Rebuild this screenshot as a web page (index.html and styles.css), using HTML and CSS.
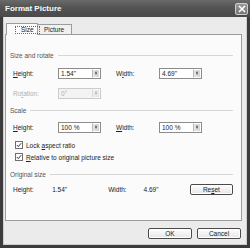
FILE: index.html
```html
<!DOCTYPE html>
<html>
<head>
<meta charset="utf-8">
<link rel="stylesheet" href="styles.css">
</head>
<body>
<div class="win">
  <div class="titlebar">
    <span class="title">Format Picture</span>
    <span class="close">
      <svg width="8" height="8" viewBox="0 0 8 8"><path d="M1 1L7 7M7 1L1 7" stroke="#fff" stroke-width="1.6"/></svg>
    </span>
  </div>
  <div class="body">
    <div class="tabs">
      <div class="tab active"><span class="focus">Size</span></div>
      <div class="tab">Picture</div>
    </div>
    <div class="panel">
      <div class="group g1"><span>Size and rotate</span><span class="rule"></span></div>
      <div class="row r1">
        <span class="lbl"><u>H</u>eight:</span>
        <span class="spin"><span class="val">1.54"</span><span class="arr"><i></i><i class="dn"></i></span></span>
        <span class="lbl2">W<u>i</u>dth:</span>
        <span class="spin"><span class="val">4.69"</span><span class="arr"><i></i><i class="dn"></i></span></span>
      </div>
      <div class="row">
        <span class="lbl dis">Ro<u>t</u>ation:</span>
        <span class="spin dis"><span class="val">0°</span><span class="arr"><i></i><i class="dn"></i></span></span>
      </div>
      <div class="group g2"><span>Scale</span><span class="rule"></span></div>
      <div class="row r3">
        <span class="lbl"><u>H</u>eight:</span>
        <span class="spin"><span class="val">100 %</span><span class="arr"><i></i><i class="dn"></i></span></span>
        <span class="lbl2"><u>W</u>idth:</span>
        <span class="spin"><span class="val">100 %</span><span class="arr"><i></i><i class="dn"></i></span></span>
      </div>
      <div class="check c1"><span class="box"><svg width="6" height="6" viewBox="0 0 6 6"><path d="M0.8 3L2.3 4.6L5.2 1.2" fill="none" stroke="#333" stroke-width="1"/></svg></span><span>Lock <u>a</u>spect ratio</span></div>
      <div class="check"><span class="box"><svg width="6" height="6" viewBox="0 0 6 6"><path d="M0.8 3L2.3 4.6L5.2 1.2" fill="none" stroke="#333" stroke-width="1"/></svg></span><span><u>R</u>elative to original picture size</span></div>
      <div class="group g3"><span>Original size</span><span class="rule"></span></div>
      <div class="row orig">
        <span class="lbl">Height:</span>
        <span class="ov">1.54"</span>
        <span class="lbl2 w2">Width:</span>
        <span class="ov2">4.69"</span>
        <span class="btn reset"><span>Re<u>s</u>et</span></span>
      </div>
    </div>
    <div class="footer">
      <span class="btn">OK</span>
      <span class="btn">Cancel</span>
    </div>
  </div>
</div>
</body>
</html>
```
FILE: styles.css
```css
* { box-sizing: border-box; }
html, body { margin: 0; padding: 0; background: #333; }
body { width: 250px; height: 248px; font-family: "Liberation Sans", Arial, sans-serif; font-size: 6.5px; color: #222; }
.win { width: 250px; height: 248px; background: #3c3c3c; display: flex; flex-direction: column; }
.titlebar { height: 17px; flex: none; display: flex; align-items: center; justify-content: space-between; padding: 0 2px 0 5px; background: linear-gradient(#6a6a6a, #555 40%, #4a4a4a); }
.title { color: #fafafa; font-weight: bold; font-size: 8px; }
.close { width: 13px; height: 12px; border: 1px solid #ccc; border-radius: 2px; background: linear-gradient(#9a9a9a, #767676); display: flex; align-items: center; justify-content: center; }
.body { flex: 1; background: #ebebeb; display: flex; flex-direction: column; margin: 0 3px 3px 3px; border: 1px solid #cfcfcf; border-top: none; padding: 6px 4px 0 1px; }
.tabs { display: flex; height: 11px; padding-left: 1px; align-items: flex-end; }
.tab { border: 1px solid #9c9c9c; border-bottom: none; background: #f0f0f0; height: 10px; padding: 0 7px 0 6px; display: flex; align-items: center; margin-right: -1px; border-radius: 1px 1px 0 0; }
.tab.active { background: #fcfcfc; position: relative; z-index: 1; margin-bottom: -1px; height: 12px; padding: 0 2px 0 8px; width: 32px; }
.focus { border: 1px dotted #666; padding: 0 5px; line-height: 6px; }
.panel { height: 187px; background: #fbfbfb; border: 1px solid #9c9c9c; padding: 14px 8px 0 7px; display: flex; flex-direction: column; }
.group { display: flex; align-items: center; height: 12px; color: #555; margin-left: -3px; flex: none; }
.rule { flex: 1; height: 1px; background: #d6d6d6; margin-left: 4px; }
.row { display: flex; align-items: center; height: 20px; flex: none; }
.r1 { margin-top: 2px; }
.g2 { margin-top: 1px; }
.r3 { margin-top: 1px; }
.c1 { margin-top: 2px; }
.g3 { margin-top: 5px; }
.orig { height: 18px; margin-top: 0; }
.lbl { width: 45px; }
.lbl2 { width: 43px; margin-left: 15px; }
.spin { width: 43px; height: 11px; border: 1px solid #8c8c8c; background: #fff; display: flex; }
.val { flex: 1; padding-left: 2px; line-height: 9px; }
.arr { width: 8px; background: linear-gradient(90deg, #e6e6e6, #d4d4d4); border: 1px solid #fff; border-left-color: #bbb; display: flex; flex-direction: column; align-items: center; justify-content: space-around; padding: 1px 0; }
.arr i { width: 0; height: 0; border-left: 1.5px solid transparent; border-right: 1.5px solid transparent; border-bottom: 2px solid #555; }
.arr i.dn { border-bottom: none; border-top: 2px solid #555; }
.dis { color: #b0b0b0; }
.spin.dis { border-color: #ccc; background: #f3f3f3; }
.spin.dis .arr { opacity: 0.4; }
.check { display: flex; align-items: center; height: 12px; margin-left: 2px; flex: none; }
.box { width: 8px; height: 8px; border: 1px solid #6f6f6f; background: #fff; margin-right: 3px; display: flex; align-items: center; justify-content: center; }
.ov { width: 55px; margin-left: -5px; }
.w2 { margin-left: 2px; width: 36px; }
.ov2 { width: 47px; }
.btn { width: 44px; height: 11px; border: 1px solid #4a4a4a; border-radius: 2px; background: linear-gradient(#fdfdfd, #e6e6e6); display: flex; align-items: center; justify-content: center; box-shadow: inset 0 0 0 1px #fff; }
.reset { height: 11px; }
.footer { flex: 1; display: flex; justify-content: flex-end; align-items: center; gap: 5px; padding-top: 1px; padding-right: 1px; }
```
